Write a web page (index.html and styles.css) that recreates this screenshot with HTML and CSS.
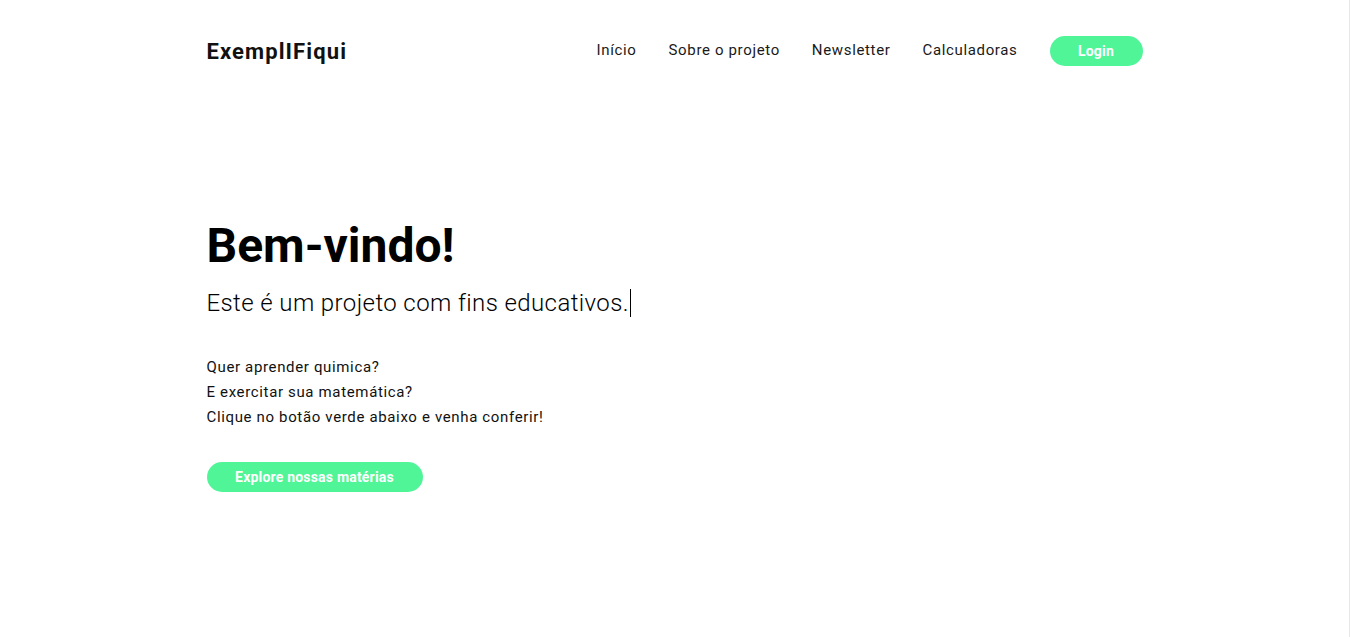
FILE: index.html
```html
<!DOCTYPE html>
<html lang="pt-BR">
<head>
<meta charset="utf-8">
<title>ExemplIFiqui</title>
<link rel="stylesheet" href="styles.css">
</head>
<body>
<div class="page">
  <header class="header">
    <div class="logo">ExemplIFiqui</div>
    <nav class="nav">
      <a href="#" class="nav-link">Início</a>
      <a href="#" class="nav-link">Sobre o projeto</a>
      <a href="#" class="nav-link">Newsletter</a>
      <a href="#" class="nav-link">Calculadoras</a>
      <a href="#" class="btn btn-login">Login</a>
    </nav>
  </header>
  <main class="hero">
    <h1 class="title">Bem-vindo!</h1>
    <p class="subtitle"><span class="typed">Este é um projeto com fins educativos.</span></p>
    <div class="text">
      <p>Quer aprender quimica?</p>
      <p>E exercitar sua matemática?</p>
      <p>Clique no botão verde abaixo e venha conferir!</p>
    </div>
    <a href="#" class="btn btn-explore">Explore nossas matérias</a>
  </main>
</div>
</body>
</html>
```

FILE: styles.css
```css
* { box-sizing: border-box; }
html, body { margin: 0; padding: 0; background: #fff; }
body {
  font-family: Roboto, "Noto Sans", sans-serif;
  color: #111;
  height: 637px;
  overflow: hidden;
}
.page {
  height: 637px;
  border-right: 1px solid #e6e6e6;
}
.header {
  width: 936px;
  margin: 0 auto;
  padding-top: 36px;
  display: flex;
  justify-content: space-between;
  align-items: center;
}
.logo {
  font-size: 22px;
  font-weight: 700;
  color: #111;
  letter-spacing: 1.1px;
}
.nav {
  display: flex;
  align-items: center;
  gap: 32px;
}
.nav-link {
  font-size: 15px;
  color: #1a1a1a;
  text-decoration: none;
  letter-spacing: 0.65px;
  padding-bottom: 2px;
}
.btn {
  display: inline-flex;
  align-items: center;
  justify-content: center;
  background: #50f598;
  color: #fff;
  font-weight: 700;
  font-size: 14px;
  text-decoration: none;
  border-radius: 15px;
  height: 30px;
  letter-spacing: 0.2px;
}
.btn-login { width: 93px; }
.hero {
  width: 936px;
  margin: 0 auto;
  padding-top: 152px;
}
.title {
  margin: 0;
  font-size: 48px;
  font-weight: 700;
  color: #000;
  line-height: 56px;
  letter-spacing: 0;
}
.subtitle {
  margin: 15px 0 0;
  font-size: 24px;
  font-weight: 300;
  line-height: 28px;
  color: #000;
  letter-spacing: 0.4px;
}
.typed {
  border-right: 1px solid #000;
  padding-right: 1px;
}
.text {
  margin-top: 38px;
  font-size: 15px;
  line-height: 25px;
  letter-spacing: 0.65px;
}
.text p { margin: 0; }
.btn-explore {
  margin-top: 32px;
  width: 216px;
}
```
